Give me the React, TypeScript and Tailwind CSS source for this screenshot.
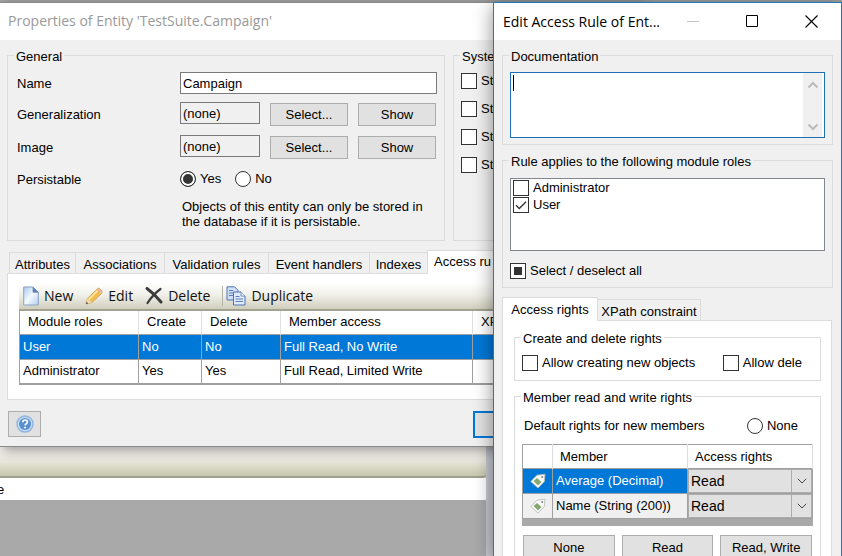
import React, { useEffect, useRef } from "react";

type GroupProps = { title: string; className?: string; children?: React.ReactNode };

function Group({ title, className = "", children }: GroupProps) {
  return (
    <fieldset className={`min-w-0 border border-[#dcdcdc] ${className}`}>
      <legend className="ml-1.5 h-5 px-0.5 pt-1 leading-4 whitespace-nowrap">{title}</legend>
      {children}
    </fieldset>
  );
}

type CheckProps = { label: string; checked?: boolean; mixed?: boolean; className?: string };

function Check({ label, checked = false, mixed = false, className = "" }: CheckProps) {
  const ref = useRef<HTMLInputElement>(null);
  useEffect(() => {
    if (ref.current) ref.current.indeterminate = mixed;
  }, [mixed]);
  return (
    <label className={`flex h-4 items-center gap-1 leading-4 whitespace-nowrap ${className}`}>
      <span className="relative size-4 shrink-0">
        <input
          ref={ref}
          type="checkbox"
          defaultChecked={checked}
          className="block size-4 appearance-none border border-[#333] bg-white indeterminate:bg-[#333] indeterminate:shadow-[inset_0_0_0_3px_white]"
        />
        {checked && (
          <svg viewBox="0 0 16 16" className="pointer-events-none absolute inset-0 size-4" fill="none" stroke="#333" strokeWidth="1.3">
            <path d="M3 8.2 6.3 11.5 13 4.8" />
          </svg>
        )}
      </span>
      {label}
    </label>
  );
}

function Radio({ label, name, checked = false }: { label: string; name: string; checked?: boolean }) {
  return (
    <label className="flex h-4 items-center gap-1 leading-4">
      <input
        type="radio"
        name={name}
        defaultChecked={checked}
        className="size-4 shrink-0 appearance-none rounded-full border border-[#333] bg-white checked:bg-[#333] checked:shadow-[inset_0_0_0_2px_white]"
      />
      {label}
    </label>
  );
}

function Button({ children, className = "" }: { children?: React.ReactNode; className?: string }) {
  return (
    <button type="button" className={`border border-[#adadad] bg-[#e1e1e1] text-center leading-5 ${className}`}>
      {children}
    </button>
  );
}

function PageIcon() {
  return (
    <svg viewBox="0 0 16 20" className="h-5 w-4">
      <defs>
        <linearGradient id="page" x1="0" y1="0" x2="1" y2="1">
          <stop offset="0" stopColor="#a9c8ee" />
          <stop offset="0.5" stopColor="#f4f9ff" />
          <stop offset="1" stopColor="#b4cff0" />
        </linearGradient>
      </defs>
      <path d="M.7 1H10l5.300 5.300V19H.7z" fill="url(#page)" stroke="#8ba3c4" />
      <path d="M10 1v5.300h5.300z" fill="#5f7fae" stroke="#6f8fc0" strokeWidth=".8" />
    </svg>
  );
}

function PencilIcon() {
  return (
    <svg viewBox="0 0 18 18" className="size-[18px]">
      <path d="M1 17 2.500 11.500 12 2q1.500-1.500 3 0l1.500 1.500q1.300 1.500 0 3L6.800 15.500z" fill="#f3bd4e" stroke="#c99a4e" strokeWidth=".8" />
      <path d="M3.800 12.300 12.600 3.500" stroke="#fde39b" strokeWidth="1.800" />
      <path d="m11.500 2.500 4.500 4.500.7-1q1-1.200-.2-2.500L15 2q-1.500-1.300-2.600-.4z" fill="#f0b49c" />
      <path d="M1 17 2.500 11.500l4.300 4z" fill="#f1d9b4" />
      <path d="m1 17 .6-2.200 1.600 1.600z" fill="#444" />
    </svg>
  );
}

function CrossIcon() {
  return (
    <svg viewBox="0 0 18 18" className="size-[18px]" fill="none" stroke="#3c3c3c" strokeLinecap="round">
      <path d="M2 1.500Q9 6.500 16 15" strokeWidth="3" />
      <path d="M15.500 2Q8 7.500 2.500 16" strokeWidth="2.200" />
    </svg>
  );
}

function CopyIcon() {
  return (
    <svg viewBox="0 0 20 20" className="size-5" stroke="#4f73b5">
      <path d="M1 .8h7.500l3.500 3.500V14H1z" fill="#cfe0f7" />
      <path d="M3 4.500h4M3 7h5M3 9.500h5" strokeWidth=".9" />
      <path d="M7.500 6H15l4 4v9H7.500z" fill="#dfeafb" />
      <path d="M15 6v4h4" fill="#fff" strokeWidth=".8" />
      <path d="M9.500 10.500h4M9.500 13h7.500M9.500 15.500h7.500" strokeWidth=".9" />
    </svg>
  );
}

function TagIcon() {
  return (
    <svg viewBox="0 0 16 16" className="mx-auto size-4">
      <path d="M.8 8.500 7 2.200 15 1.200 14.300 8.500 8 15z" fill="#fafafa" stroke="#b9bdb9" strokeWidth=".9" />
      <path d="m3.500 8 3.500-3 4.500 4L8 12.500z" fill="#86a870" />
      <circle cx="12.200" cy="4" r="1.100" fill="#888" />
    </svg>
  );
}

function HelpIcon() {
  return (
    <svg viewBox="0 0 18 18" className="mx-auto size-[18px]">
      <circle cx="9" cy="9" r="8.700" fill="#8fb4e0" />
      <circle cx="9" cy="9" r="7.300" fill="#c4dcf5" />
      <circle cx="9" cy="9" r="6" fill="#5a8fd0" />
      <path d="M6.800 7.300q0-2.300 2.300-2.300t2.200 2q0 1.300-1.300 1.900-.9.400-.9 1.400" fill="none" stroke="#fff" strokeWidth="1.700" />
      <circle cx="9.100" cy="12.400" r="1" fill="#fff" />
    </svg>
  );
}

function Tool({ icon, label }: { icon: React.ReactNode; label: string }) {
  return (
    <button type="button" className="flex items-center gap-[5px]">
      {icon}
      {label}
    </button>
  );
}

const tabs = [
  { label: "Attributes", width: "w-[66px]" },
  { label: "Associations", width: "w-[89px]" },
  { label: "Validation rules", width: "w-[104px]" },
  { label: "Event handlers", width: "w-[101px]" },
  { label: "Indexes", width: "w-[58px]" },
];

const roles = [
  { role: "User", create: "No", del: "No", access: "Full Read, No Write", selected: true },
  { role: "Administrator", create: "Yes", del: "Yes", access: "Full Read, Limited Write", selected: false },
];

const members = [
  { name: "Average (Decimal)", selected: true },
  { name: "Name (String (200))", selected: false },
];

function Reference({ id, label }: { id: string; label: string }) {
  return (
    <div className="flex h-6 items-center">
      <label htmlFor={id} className="w-[163px] shrink-0 pt-0.5">{label}</label>
      <input id={id} readOnly defaultValue="(none)" className="h-[22px] w-20 self-start border border-[#7a7a7a] bg-[#f0f0f0] px-0.5" />
      <Button className="ml-2.5 h-[23px] w-[78px] self-end">Select...</Button>
      <Button className="ml-2.5 h-[23px] w-[78px] self-end">Show</Button>
    </div>
  );
}

function EntityWindow() {
  return (
    <section className="absolute top-0.5 right-[200px] left-0 border-y border-[#8a8a8a] bg-[#f0f0f0] shadow-[4px_3px_10px_rgba(0,0,0,0.35)]">
      <h1 className="h-[37px] bg-white pl-2 font-['Open_Sans',sans-serif] text-[14px] leading-9 text-[#999]">
        Properties of Entity 'TestSuite.Campaign'
      </h1>
      <div className="pt-[5px] pl-[7px]">
        <div className="flex gap-2">
          <Group title="General" className="h-[196px] w-[438px] shrink-0">
            <div className="flex flex-col pt-[7px] pr-[7px] pl-[9px]">
              <div className="mb-2 flex h-[22px] items-center">
                <label htmlFor="name" className="w-[163px] shrink-0 pt-0.5">Name</label>
                <input id="name" defaultValue="Campaign" className="h-[22px] min-w-0 flex-1 border border-[#7a7a7a] bg-white px-0.5" />
              </div>
              <div className="flex flex-col gap-[9px]">
                <Reference id="generalization" label="Generalization" />
                <Reference id="image" label="Image" />
              </div>
              <div className="mt-3 flex h-4 items-center" role="radiogroup" aria-label="Persistable">
                <span className="w-[163px] shrink-0 pt-0.5">Persistable</span>
                <div className="flex gap-3.5">
                  <Radio name="persistable" label="Yes" checked />
                  <Radio name="persistable" label="No" />
                </div>
              </div>
              <p className="mt-3 ml-[165px] leading-[15px] whitespace-nowrap">
                Objects of this entity can only be stored in
                <br />
                the database if it is persistable.
              </p>
            </div>
          </Group>
          <Group title="Syste" className="h-[196px] flex-1">
            <div className="flex flex-col gap-3 pt-2 pl-[7px]">
              <Check label="St" />
              <Check label="St" />
              <Check label="St" />
              <Check label="St" />
            </div>
          </Group>
        </div>

        <div role="tablist" className="mt-[9px] ml-0.5 flex h-[23px] items-end">
          {tabs.map((t) => (
            <button key={t.label} role="tab" type="button" className={`h-[21px] border-t border-l border-[#dcdcdc] pt-0.5 leading-5 whitespace-nowrap ${t.width}`}>
              {t.label}
            </button>
          ))}
          <button role="tab" type="button" aria-selected="true" className="-mb-px h-6 border border-b-0 border-[#dcdcdc] bg-white px-1.5 pb-0.5 leading-5 whitespace-nowrap">
            Access ru
          </button>
        </div>
        <div className="border border-[#dcdcdc] bg-white pt-[9px] pr-3 pb-3.5 pl-[11px]">
          <div className="flex h-7 items-center gap-3 border-b-2 border-[#a3a392] bg-linear-to-b from-white via-[#efeee6] to-[#cfcebd] pl-1 font-['Open_Sans',sans-serif] text-[14px] text-[#111]">
            <Tool icon={<PageIcon />} label="New" />
            <Tool icon={<PencilIcon />} label="Edit" />
            <Tool icon={<CrossIcon />} label="Delete" />
            <span className="flex items-center gap-[3px]">
              <span className="h-5 border-l border-[#b5b5a5]" />
              <Tool icon={<CopyIcon />} label="Duplicate" />
            </span>
          </div>
          <table className="w-full table-fixed border-collapse border-b-2 border-l border-[#a0a0a0] text-left">
            <thead>
              <tr className="h-[23px] [&>th]:border-r [&>th]:border-r-[#e0e0e0] [&>th]:pl-2 [&>th]:font-normal">
                <th className="w-[119px]">Module roles</th>
                <th className="w-[63px]">Create</th>
                <th className="w-[79px]">Delete</th>
                <th className="w-48">Member access</th>
                <th>XP</th>
              </tr>
            </thead>
            <tbody>
              {roles.map((r) => (
                <tr
                  key={r.role}
                  className={`h-[25px] border-t border-[#a0a0a0] [&>td]:border-r [&>td]:border-[#a0a0a0] [&>td]:pl-[3px] ${r.selected ? "bg-[#0078d7] text-white" : ""}`}
                >
                  <td>{r.role}</td>
                  <td>{r.create}</td>
                  <td>{r.del}</td>
                  <td>{r.access}</td>
                  <td />
                </tr>
              ))}
            </tbody>
          </table>
        </div>

        <div className="mt-2.5 mb-2 flex h-7 items-center pl-px">
          <button type="button" aria-label="Help" className="h-[26px] w-[33px] border border-[#adadad] bg-[#e1e1e1]">
            <HelpIcon />
          </button>
          <button type="button" aria-label="OK" className="ml-[432px] h-[27px] w-[90px] border-2 border-[#0078d7] bg-[#e1e1e1]" />
        </div>
      </div>
    </section>
  );
}

function AccessRuleWindow() {
  return (
    <section className="absolute top-0.5 right-0 bottom-0 left-[493px] overflow-hidden border border-b-0 border-[#1f78c0] bg-[#f0f0f0] shadow-[0_4px_18px_rgba(0,0,0,0.45)]">
      <header className="flex h-[37px] items-center bg-white pl-[9px]">
        <h2 className="flex-1 font-['Open_Sans',sans-serif] text-[14px] leading-9 whitespace-nowrap text-black">Edit Access Rule of Ent...</h2>
        <div className="flex gap-[46px] pr-[23px]">
          <button type="button" aria-label="Minimize">
            <svg viewBox="0 0 13 13" className="size-[13px]"><path d="M0 6.500h12" stroke="#c4c4c4" /></svg>
          </button>
          <button type="button" aria-label="Maximize">
            <svg viewBox="0 0 13 13" className="size-[13px]"><path d="M.5.5h11v11H.5z" fill="none" stroke="#000" /></svg>
          </button>
          <button type="button" aria-label="Close">
            <svg viewBox="0 0 13 13" className="size-[13px]"><path d="m.5.5 12 12m0-12-12 12" fill="none" stroke="#000" strokeWidth="1.100" /></svg>
          </button>
        </div>
      </header>

      <div className="flex flex-col px-2 pt-[5px]">
        <Group title="Documentation" className="h-[100px]">
          <div className="relative mx-[7px] mt-[7px] h-[66px]">
            <textarea aria-label="Documentation" className="block h-full w-full resize-none border border-[#1f6fb5] bg-white" />
            <span className="absolute top-[3px] left-[3px] h-4 w-px bg-black" />
            <div className="absolute top-px right-[3px] bottom-px flex w-[19px] flex-col items-center justify-between bg-[#f0f0f0] pt-2 pb-1.5">
              <svg viewBox="0 0 10 8" className="h-2 w-2.5" fill="none" stroke="#bcbcbc" strokeWidth="2"><path d="m.5 6.500 4.500-4.500 4.500 4.500" /></svg>
              <svg viewBox="0 0 10 8" className="h-2 w-2.5" fill="none" stroke="#bcbcbc" strokeWidth="2"><path d="m.5 1.500 4.500 4.500 4.500-4.500" /></svg>
            </div>
          </div>
        </Group>

        <Group title="Rule applies to the following module roles" className="mt-[5px] h-[138px]">
          <div className="mx-[7px] mt-2 flex h-[73px] flex-col gap-px border border-[#828790] bg-white pt-px pl-0.5">
            <Check label="Administrator" />
            <Check label="User" checked />
          </div>
          <Check label="Select / deselect all" mixed className="mt-3 ml-[7px]" />
        </Group>

        <div role="tablist" className="mt-2 flex h-6 items-end">
          <button role="tab" type="button" aria-selected="true" className="z-10 -mb-px h-6 w-[96px] border border-b-0 border-[#dcdcdc] bg-white leading-5 whitespace-nowrap">
            Access rights
          </button>
          <button role="tab" type="button" className="h-[21px] w-[103px] border border-b-0 border-l-0 border-[#dcdcdc] pt-0.5 leading-5 whitespace-nowrap">
            XPath constraint
          </button>
        </div>
        <div className="mr-px h-64 border border-[#dcdcdc] bg-white pt-1.5 pr-2.5 pl-[11px]">
          <Group title="Create and delete rights" className="h-[54px]">
            <div className="flex justify-between overflow-hidden pt-2 pr-[18px] pl-[7px]">
              <Check label="Allow creating new objects" />
              <Check label="Allow dele" />
            </div>
          </Group>
          <Group title="Member read and write rights" className="mt-[5px] h-60">
            <div className="mt-2.5 flex h-5 items-center justify-between pr-[22px] pl-[9px]" role="radiogroup" aria-label="Default rights for new members">
              <span>Default rights for new members</span>
              <Radio name="default-rights" label="None" />
            </div>
            <div className="mx-[7px] mt-2 border-b-[7px] border-[#a9a9a9]">
              <table className="w-full table-fixed border-collapse border border-[#a0a0a0] text-left">
                <thead>
                  <tr className="h-6 [&>th]:border-r [&>th]:border-r-[#dcdcdc] [&>th]:pl-[7px] [&>th]:font-normal">
                    <th className="w-[30px]" />
                    <th className="w-[135px]">Member</th>
                    <th>Access rights</th>
                  </tr>
                </thead>
                <tbody>
                  {members.map((m) => (
                    <tr key={m.name} className={`h-[25px] border-t border-[#a0a0a0] [&>td]:border-r [&>td]:border-[#a0a0a0] ${m.selected ? "bg-[#0078d7] text-white" : "bg-[#f0f0f0]"}`}>
                      <td><TagIcon /></td>
                      <td className="pl-[3px] whitespace-nowrap">{m.name}</td>
                      <td className="p-0">
                        <div className="relative h-6">
                          <select aria-label={`Access rights of ${m.name}`} className="block h-6 w-full appearance-none border border-[#adadad] bg-[#e1e1e1] pl-0.5 text-[14px] text-black">
                            <option>Read</option>
                          </select>
                          <span className="pointer-events-none absolute inset-y-px right-px flex w-5 items-center justify-center border-l border-[#adadad]">
                            <svg viewBox="0 0 10 6" className="h-1.5 w-2.5" fill="none" stroke="#444"><path d="m.8.8 4.200 4.200L9.200.8" /></svg>
                          </span>
                        </div>
                      </td>
                    </tr>
                  ))}
                </tbody>
              </table>
            </div>
            <div className="mx-2 mt-[9px] flex gap-[7px]">
              <Button className="h-[26px] flex-1">None</Button>
              <Button className="h-[26px] flex-1">Read</Button>
              <Button className="h-[26px] flex-1">Read, Write</Button>
            </div>
          </Group>
        </div>
      </div>
    </section>
  );
}

export default function App() {
  return (
    <main className="relative flex h-screen w-full flex-col overflow-hidden bg-[#c8c8d2] font-['Liberation_Sans',Arial,sans-serif] text-[13px] leading-5 text-black">
      <div className="h-[447px] shrink-0 bg-[#a0a0a0]" />
      <div className="flex flex-1 flex-col">
        <div className="h-[31px] w-[486px] rounded-br-sm border-b-2 border-[#a0a090] bg-linear-to-b from-[#f0eeea] via-[#e8e4dc] to-[#c6c8aa]" />
        <div className="h-[22px] w-[486px] overflow-hidden bg-white leading-6">
          <span className="-ml-[3px]">e</span>
        </div>
        <div className="w-[486px] flex-1 bg-[#a9a9a9]" />
      </div>
      <EntityWindow />
      <AccessRuleWindow />
    </main>
  );
}
